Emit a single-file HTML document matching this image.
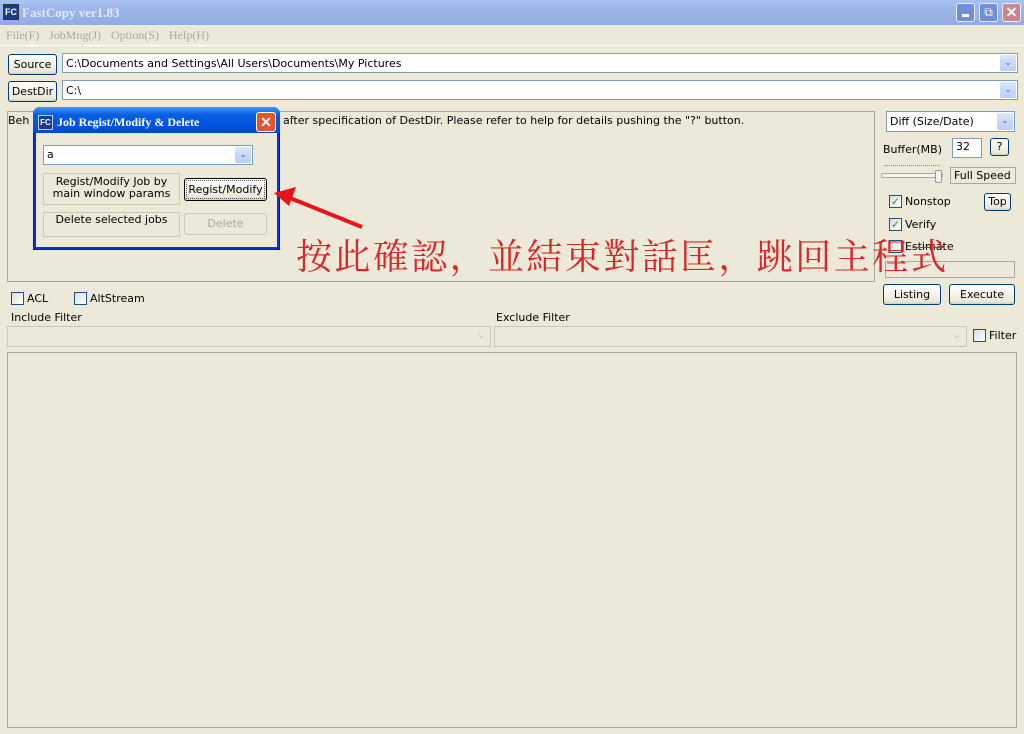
<!DOCTYPE html>
<html><head><meta charset="utf-8"><style>
*{box-sizing:border-box;margin:0;padding:0}
body{width:1024px;height:734px;background:#ece9d8;position:relative;overflow:hidden;font-family:Tahoma,"DejaVu Sans",sans-serif;font-size:11px;color:#000}
.a{position:absolute}
.btn{position:absolute;border:1px solid #003c74;border-radius:3px;background:linear-gradient(#fff,#ece9d8 85%,#d6d0c5);text-align:center;font-size:11px}
.inp{position:absolute;background:#fff;border:1px solid #7f9db9;padding:3px 3px;font-size:11px}
.dd{position:absolute;right:1px;top:1px;bottom:1px;width:16px;background:linear-gradient(#dbe6fd,#b8cdf7);border-radius:2px;color:#4d6185;font-size:9px;text-align:center;line-height:16px}
.cb{position:absolute;width:13px;height:13px;border:1px solid #1c5180;background:linear-gradient(135deg,#dcdcd7,#fff)}
.ck{color:#21a121;font-size:11px;line-height:11px;text-align:center;font-weight:bold}
.dis{position:absolute;border:1px solid #c9c7ba;background:#ece9d8}
.m{position:absolute;top:28px;color:#aca899;font:12px 'Liberation Serif',serif}
</style></head><body>
<div class="a" style="left:0;top:0;width:1024px;height:25px;background:linear-gradient(#a8c2f0,#9cb6ea 40%,#91acdf);"></div>
<div class="a" style="left:3px;top:4px;width:16px;height:16px;background:#1b3a8c;border:1px solid #333;color:#fff;font:bold 9px 'Liberation Sans';line-height:14px;text-align:center">FC</div>
<div class="a" style="left:22px;top:5px;color:#e2eaf9;font:bold 13px 'Liberation Serif',serif">FastCopy ver1.83</div>
<div class="a" style="left:956px;top:3px;width:19px;height:19px;border-radius:3px;background:#6f8fd8;border:1px solid #eef"></div>
<div class="a" style="left:962px;top:14px;width:7px;height:3px;background:#fff"></div>
<div class="a" style="left:979px;top:3px;width:19px;height:19px;border-radius:3px;background:#6f8fd8;border:1px solid #eef;color:#fff;text-align:center;font-size:12px;line-height:17px">⧉</div>
<div class="a" style="left:1002px;top:3px;width:19px;height:19px;border-radius:3px;background:#c7878c;border:1px solid #eef;color:#fff;text-align:center;font:bold 14px sans-serif;line-height:17px">✕</div>
<div class="m" style="left:6px">File(F)</div>
<div class="m" style="left:49px">JobMng(J)</div>
<div class="m" style="left:111px">Option(S)</div>
<div class="m" style="left:169px">Help(H)</div>
<div class="a" style="left:0;top:45px;width:1024px;height:1px;background:#fff"></div>
<div class="btn" style="left:8px;top:54px;width:49px;height:21px;line-height:19px">Source</div>
<div class="inp" style="left:62px;top:53px;width:956px;height:20px">C:\Documents and Settings\All Users\Documents\My Pictures<div class="dd">⌄</div></div>
<div class="btn" style="left:8px;top:81px;width:49px;height:21px;line-height:19px">DestDir</div>
<div class="inp" style="left:62px;top:80px;width:956px;height:20px">C:\<div class="dd">⌄</div></div>
<div class="a" style="left:7px;top:111px;width:868px;height:171px;border:1px solid #aca899"></div>
<div class="a" style="left:8px;top:114px">Beh</div>
<div class="a" style="left:283px;top:114px">after specification of DestDir. Please refer to help for details pushing the "?" button.</div>
<div class="inp" style="left:886px;top:111px;width:129px;height:21px">Diff (Size/Date)<div class="dd">⌄</div></div>
<div class="a" style="left:883px;top:143px">Buffer(MB)</div>
<div class="inp" style="left:952px;top:138px;width:30px;height:20px;padding:1px 3px">32</div>
<div class="btn" style="left:990px;top:138px;width:19px;height:18px;line-height:16px">?</div>
<div class="a" style="left:884px;top:165px;width:56px;height:3px;border-top:1px dotted #888"></div>
<div class="a" style="left:881px;top:173px;width:62px;height:5px;border:1px solid #aca899;background:#f4f3ee;border-radius:2px"></div>
<div class="a" style="left:935px;top:170px;width:7px;height:13px;background:#f4f3ee;border:1px solid #999;border-radius:2px"></div>
<div class="a" style="left:950px;top:167px;width:66px;height:17px;border:1px solid #aca899;padding:1px 3px">Full Speed</div>
<div class="cb ck" style="left:889px;top:195px">✓</div><div class="a" style="left:905px;top:195px">Nonstop</div>
<div class="btn" style="left:984px;top:193px;width:27px;height:18px;line-height:16px">Top</div>
<div class="cb ck" style="left:889px;top:218px">✓</div><div class="a" style="left:905px;top:218px">Verify</div>
<div class="cb" style="left:889px;top:240px"></div><div class="a" style="left:905px;top:240px">Estimate</div>
<div class="a" style="left:885px;top:261px;width:130px;height:17px;border:1px solid #aca899"></div>
<div class="btn" style="left:883px;top:284px;width:58px;height:21px;line-height:19px">Listing</div>
<div class="btn" style="left:949px;top:284px;width:66px;height:21px;line-height:19px">Execute</div>
<div class="cb" style="left:11px;top:292px"></div><div class="a" style="left:27px;top:292px">ACL</div>
<div class="cb" style="left:74px;top:292px"></div><div class="a" style="left:90px;top:292px">AltStream</div>
<div class="a" style="left:11px;top:311px">Include Filter</div>
<div class="a" style="left:496px;top:311px">Exclude Filter</div>
<div class="dis" style="left:7px;top:326px;width:484px;height:21px"><div class="a" style="right:1px;top:1px;width:16px;height:17px;color:#c9c7ba;text-align:center">⌄</div></div>
<div class="dis" style="left:494px;top:326px;width:473px;height:21px"><div class="a" style="right:1px;top:1px;width:16px;height:17px;color:#c9c7ba;text-align:center">⌄</div></div>
<div class="cb" style="left:973px;top:329px"></div><div class="a" style="left:989px;top:329px">Filter</div>
<div class="a" style="left:7px;top:352px;width:1010px;height:376px;border:1px solid #aca899"></div>
<!-- dialog -->
<div class="a" style="left:33px;top:107px;width:247px;height:143px;background:#0831d9;border-radius:7px 7px 0 0;border:1px solid #001ea0"></div>
<div class="a" style="left:33px;top:107px;width:247px;height:26px;border-radius:7px 7px 0 0;background:linear-gradient(#3d95ff,#0a5fe0 30%,#0054e3 70%,#0046c8)"></div>
<div class="a" style="left:38px;top:115px;width:15px;height:15px;background:#1b3a8c;border:1px solid #ccc;color:#fff;font:bold 8px 'Liberation Sans';line-height:13px;text-align:center">FC</div>
<div class="a" style="left:57px;top:115px;color:#fff;font:bold 12px 'Liberation Serif',serif">Job Regist/Modify &amp; Delete</div>
<div class="a" style="left:256px;top:112px;width:20px;height:20px;border-radius:3px;background:#e0572c;border:1px solid #fff;color:#fff;text-align:center;font:bold 14px sans-serif;line-height:18px">✕</div>
<div class="a" style="left:36px;top:133px;width:241px;height:114px;background:#ece9d8"></div>
<div class="inp" style="left:43px;top:145px;width:210px;height:20px;padding:2px 3px">a<div class="dd">⌄</div></div>
<div class="a" style="left:43px;top:173px;width:137px;height:32px;border:1px solid #c9c7ba;text-align:center;line-height:12px;padding-top:2px">Regist/Modify Job by<br>main window params</div>
<div class="btn" style="left:184px;top:178px;width:83px;height:23px;line-height:21px;border:1px solid #000;outline:1px dotted #555;outline-offset:-3px">Regist/Modify</div>
<div class="a" style="left:43px;top:212px;width:137px;height:25px;border:1px solid #c9c7ba;text-align:center">Delete selected jobs</div>
<div class="a" style="left:184px;top:213px;width:83px;height:22px;border:1px solid #c9c7ba;border-radius:3px;color:#aca899;text-align:center;line-height:20px">Delete</div>
<svg class="a" style="left:0;top:0" width="1024" height="734"><line x1="362" y1="227" x2="290" y2="198" stroke="#e8141b" stroke-width="4"/><polygon points="274,193 296,187 289,206" fill="#e8141b"/></svg>
<div class="a" style="left:296px;top:233px;color:#d9262a;font:36px 'Noto Serif CJK SC','Liberation Serif',serif;line-height:44px;white-space:nowrap;letter-spacing:2.4px">按此確認，並結束對話匡，跳回主程式</div>
</body></html>
